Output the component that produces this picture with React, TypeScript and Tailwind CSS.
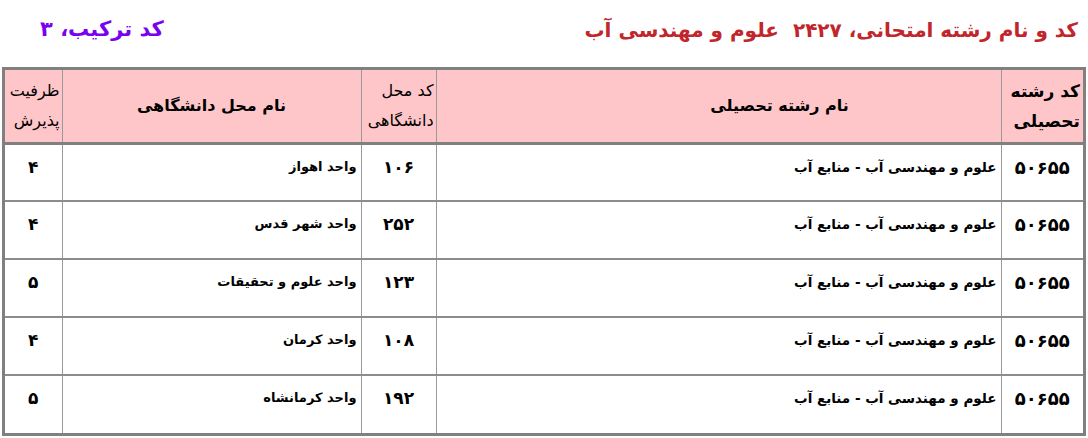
const rows = [
  { code: "۵۰۶۵۵", field: "علوم و مهندسی آب - منابع آب", unitCode: "۱۰۶", unit: "واحد اهواز", cap: "۴" },
  { code: "۵۰۶۵۵", field: "علوم و مهندسی آب - منابع آب", unitCode: "۲۵۲", unit: "واحد شهر قدس", cap: "۴" },
  { code: "۵۰۶۵۵", field: "علوم و مهندسی آب - منابع آب", unitCode: "۱۲۳", unit: "واحد علوم و تحقیقات", cap: "۵" },
  { code: "۵۰۶۵۵", field: "علوم و مهندسی آب - منابع آب", unitCode: "۱۰۸", unit: "واحد کرمان", cap: "۴" },
  { code: "۵۰۶۵۵", field: "علوم و مهندسی آب - منابع آب", unitCode: "۱۹۲", unit: "واحد کرمانشاه", cap: "۵" },
];

export default function App() {
  return (
    <div
      dir="rtl"
      className="w-[1088px] h-[438px] bg-white overflow-hidden font-['DejaVu_Sans',sans-serif] text-black"
    >
      <div className="flex h-[67px] items-center justify-between pr-[10px] pl-[40px] pb-[8px]">
        <h1 className="text-[20px] font-bold text-[#c0262c]">
          کد و نام رشته امتحانی، ۲۴۲۷&nbsp;&nbsp;علوم و مهندسی آب
        </h1>
        <h2 className="text-[21px] font-bold text-[#7a00f0]">کد ترکیب، ۳</h2>
      </div>

      <div className="mx-[2px] border-[3px] border-[#808080]">
        <table className="w-full table-fixed border-collapse">
          <colgroup>
            <col className="w-[82px]" />
            <col className="w-[565px]" />
            <col className="w-[75px]" />
            <col className="w-[299px]" />
            <col />
          </colgroup>
          <thead>
            <tr className="h-[73px] bg-[#ffc6c9] border-b-[3px] border-[#808080]">
              <th className="border-l border-[#999] px-[3px] text-right align-middle text-[17px] font-bold leading-[30px]">
                کد رشته
                <br />
                تحصیلی
              </th>
              <th className="border-l border-[#999] pl-[122px] text-center text-[16px] font-bold">
                نام رشته تحصیلی
              </th>
              <th className="border-l border-[#999] px-[2px] text-right text-[16px] font-normal leading-[30px]">
                کد محل
                <br />
                دانشگاهی
              </th>
              <th className="border-l border-[#999] text-center text-[16px] font-bold">نام محل دانشگاهی</th>
              <th className="px-[2px] text-right text-[16px] font-normal leading-[30px]">
                ظرفیت
                <br />
                پذیرش
              </th>
            </tr>
          </thead>
          <tbody>
            {rows.map((r, i) => (
              <tr key={i} className={"h-[58px] " + (i < rows.length - 1 ? "border-b-2 border-[#8c8c8c]" : "")}>
                <td className="border-l border-[#999] pt-[9px] text-center align-top text-[18px] font-bold">
                  {r.code}
                </td>
                <td className="border-l border-[#999] pt-[12px] pr-[4px] align-top text-[13.5px] font-bold">
                  {r.field}
                </td>
                <td className="border-l border-[#999] pt-[10px] text-center align-top text-[17px] font-bold">
                  {r.unitCode}
                </td>
                <td className="border-l border-[#999] pt-[12px] pr-[4px] align-top text-[13px] font-bold">
                  {r.unit}
                </td>
                <td className="pt-[10px] text-center align-top text-[17px] font-bold">{r.cap}</td>
              </tr>
            ))}
          </tbody>
        </table>
      </div>
    </div>
  );
}
